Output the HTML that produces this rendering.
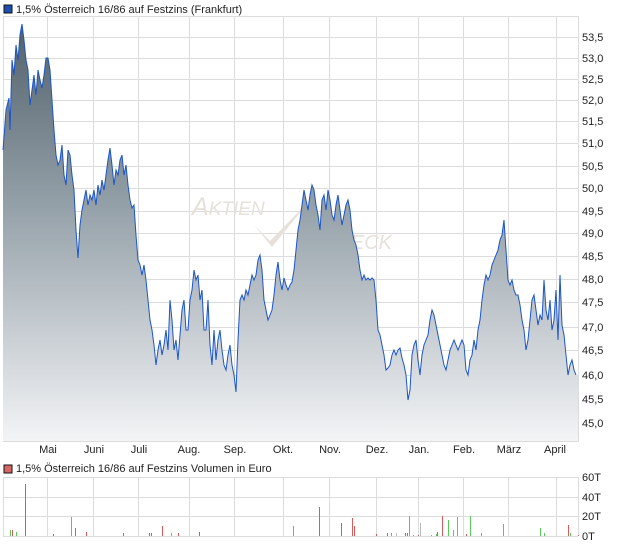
<!DOCTYPE html>
<html><head><meta charset="utf-8"><style>
body{margin:0;background:#fff;width:620px;height:546px;overflow:hidden;font-family:"Liberation Sans",sans-serif}
svg{position:absolute;left:0;top:0}
</style></head><body>
<svg width="620" height="546" viewBox="0 0 620 546" font-family="Liberation Sans, sans-serif" font-size="11" fill="#222">
<defs>
<linearGradient id="g" x1="0" y1="16" x2="0" y2="441" gradientUnits="userSpaceOnUse">
<stop offset="0" stop-color="#4f5e69"/><stop offset="0.45" stop-color="#95a1a9"/><stop offset="1" stop-color="#f3f4f6"/>
</linearGradient>
</defs>
<rect x="4" y="5" width="8" height="8" fill="#1f4fb0" stroke="#111" stroke-width="1"/>
<text x="16" y="13">1,5% Österreich 16/86 auf Festzins (Frankfurt)</text>
<g stroke="#dcdcdc" stroke-width="1" shape-rendering="crispEdges">
<rect x="3.5" y="16.5" width="575" height="425" fill="none"/>
<path d="M47.5 16V441M93.5 16V441M138.5 16V441M189.5 16V441M234.5 16V441M283.5 16V441M329.5 16V441M376.5 16V441M418.5 16V441M463.5 16V441M508.5 16V441M556.5 16V441"/>
<path d="M3 37.5H578M3 58.5H578M3 79.5H578M3 100.5H578M3 121.5H578M3 143.5H578M3 166.5H578M3 188.5H578M3 211.5H578M3 233.5H578M3 256.5H578M3 279.5H578M3 302.5H578M3 327.5H578M3 350.5H578M3 375.5H578M3 399.5H578M3 423.5H578"/>
</g>
<g fill="#e6e1db" font-style="italic" font-size="25">
<text x="192" y="215">A<tspan font-size="19">KTIEN</tspan></text>
<text x="322" y="249" font-size="20">CHECK</text>
</g>
<path d="M254 225L270 241L312 198L272 247Z" fill="#e6e1db"/>
<polygon fill="url(#g)" points="3,441 3,150 6,110 9,98 10,130 12,60 14,75 16,45 18,60 20,35 22,24 24,40 26,60 28,70 30,105 32,90 34,75 36,95 38,70 40,80 42,88 44,75 46,58 48,58 50,70 52,100 54,130 56,155 58,165 60,160 62,145 64,175 66,185 68,150 70,155 72,175 74,190 76,230 78,258 80,225 82,210 84,200 86,190 88,205 90,195 92,200 94,190 96,205 98,185 100,195 102,180 104,190 106,175 108,160 110,148 112,165 114,185 116,170 118,175 120,160 122,155 124,175 126,165 128,185 130,200 132,208 134,205 136,235 138,260 140,265 142,275 144,265 146,280 148,300 150,320 152,330 154,345 156,365 158,350 160,340 162,355 164,345 166,330 168,350 170,300 172,320 174,350 176,340 178,360 180,335 182,310 184,300 186,330 188,330 190,300 192,290 194,270 196,280 198,275 200,300 202,290 204,330 206,330 208,300 210,345 212,365 214,330 216,360 218,340 220,330 222,350 224,365 226,370 228,355 230,345 232,365 234,375 236,392 238,340 240,300 242,295 244,300 246,290 248,295 250,285 252,275 254,280 256,275 258,260 260,255 262,270 264,300 266,310 268,320 270,315 272,310 274,295 276,275 278,262 280,280 282,290 284,278 286,285 288,290 290,285 292,282 294,270 296,250 298,230 300,220 302,205 304,190 306,200 308,210 310,195 312,185 314,190 316,205 318,215 320,230 322,200 324,195 326,210 328,190 330,200 332,215 334,220 336,205 338,195 340,210 342,225 344,215 346,205 348,200 350,210 352,230 354,240 356,245 358,255 360,270 362,280 364,275 366,280 368,278 370,280 372,278 374,280 376,300 378,330 380,335 382,345 384,355 386,370 388,368 390,365 392,355 394,350 396,355 398,350 400,348 402,358 404,365 406,375 408,400 410,390 412,355 414,345 416,340 418,360 420,375 422,355 424,345 426,340 428,335 430,320 432,310 434,315 436,325 438,335 440,345 442,355 444,365 446,370 448,360 450,350 452,345 454,340 456,345 458,350 460,345 462,340 464,345 466,370 468,375 470,360 472,355 474,340 476,350 478,330 480,320 482,300 484,285 486,275 488,280 490,275 492,265 494,260 496,255 498,250 500,240 502,235 504,220 506,250 508,280 510,285 512,280 514,290 516,295 518,295 520,305 522,320 524,330 526,350 528,340 530,320 532,300 534,295 536,310 538,325 540,315 542,320 544,280 546,310 548,320 550,300 552,330 554,320 556,290 558,340 560,275 562,325 564,335 566,355 568,375 570,365 572,360 574,370 576,375 578,375 578,441"/>
<polyline fill="none" stroke="#1b55c9" stroke-width="1" points="3,150 6,110 9,98 10,130 12,60 14,75 16,45 18,60 20,35 22,24 24,40 26,60 28,70 30,105 32,90 34,75 36,95 38,70 40,80 42,88 44,75 46,58 48,58 50,70 52,100 54,130 56,155 58,165 60,160 62,145 64,175 66,185 68,150 70,155 72,175 74,190 76,230 78,258 80,225 82,210 84,200 86,190 88,205 90,195 92,200 94,190 96,205 98,185 100,195 102,180 104,190 106,175 108,160 110,148 112,165 114,185 116,170 118,175 120,160 122,155 124,175 126,165 128,185 130,200 132,208 134,205 136,235 138,260 140,265 142,275 144,265 146,280 148,300 150,320 152,330 154,345 156,365 158,350 160,340 162,355 164,345 166,330 168,350 170,300 172,320 174,350 176,340 178,360 180,335 182,310 184,300 186,330 188,330 190,300 192,290 194,270 196,280 198,275 200,300 202,290 204,330 206,330 208,300 210,345 212,365 214,330 216,360 218,340 220,330 222,350 224,365 226,370 228,355 230,345 232,365 234,375 236,392 238,340 240,300 242,295 244,300 246,290 248,295 250,285 252,275 254,280 256,275 258,260 260,255 262,270 264,300 266,310 268,320 270,315 272,310 274,295 276,275 278,262 280,280 282,290 284,278 286,285 288,290 290,285 292,282 294,270 296,250 298,230 300,220 302,205 304,190 306,200 308,210 310,195 312,185 314,190 316,205 318,215 320,230 322,200 324,195 326,210 328,190 330,200 332,215 334,220 336,205 338,195 340,210 342,225 344,215 346,205 348,200 350,210 352,230 354,240 356,245 358,255 360,270 362,280 364,275 366,280 368,278 370,280 372,278 374,280 376,300 378,330 380,335 382,345 384,355 386,370 388,368 390,365 392,355 394,350 396,355 398,350 400,348 402,358 404,365 406,375 408,400 410,390 412,355 414,345 416,340 418,360 420,375 422,355 424,345 426,340 428,335 430,320 432,310 434,315 436,325 438,335 440,345 442,355 444,365 446,370 448,360 450,350 452,345 454,340 456,345 458,350 460,345 462,340 464,345 466,370 468,375 470,360 472,355 474,340 476,350 478,330 480,320 482,300 484,285 486,275 488,280 490,275 492,265 494,260 496,255 498,250 500,240 502,235 504,220 506,250 508,280 510,285 512,280 514,290 516,295 518,295 520,305 522,320 524,330 526,350 528,340 530,320 532,300 534,295 536,310 538,325 540,315 542,320 544,280 546,310 548,320 550,300 552,330 554,320 556,290 558,340 560,275 562,325 564,335 566,355 568,375 570,365 572,360 574,370 576,375"/>
<g>
<text x="582" y="41">53,5</text><text x="582" y="62">53,0</text><text x="582" y="83">52,5</text><text x="582" y="104">52,0</text><text x="582" y="125">51,5</text><text x="582" y="147">51,0</text><text x="582" y="170">50,5</text><text x="582" y="192">50,0</text><text x="582" y="215">49,5</text><text x="582" y="237">49,0</text><text x="582" y="260">48,5</text><text x="582" y="283">48,0</text><text x="582" y="306">47,5</text><text x="582" y="331">47,0</text><text x="582" y="354">46,5</text><text x="582" y="379">46,0</text><text x="582" y="403">45,5</text><text x="582" y="427">45,0</text>
</g>
<g text-anchor="middle">
<text x="48" y="453">Mai</text><text x="94" y="453">Juni</text><text x="139" y="453">Juli</text><text x="189" y="453">Aug.</text><text x="235" y="453">Sep.</text><text x="283" y="453">Okt.</text><text x="330" y="453">Nov.</text><text x="377" y="453">Dez.</text><text x="419" y="453">Jan.</text><text x="464" y="453">Feb.</text><text x="509" y="453">März</text><text x="555" y="453">April</text>
</g>
<rect x="4" y="465" width="8" height="8" fill="#d96666" stroke="#111" stroke-width="1"/>
<text x="16" y="472">1,5% Österreich 16/86 auf Festzins Volumen in Euro</text>
<g stroke="#dcdcdc" stroke-width="1" shape-rendering="crispEdges">
<path d="M3.5 477V536M578.5 477V536M47.5 477V536M93.5 477V536M138.5 477V536M189.5 477V536M234.5 477V536M283.5 477V536M329.5 477V536M376.5 477V536M418.5 477V536M463.5 477V536M508.5 477V536M556.5 477V536"/>
<path d="M3 477.5H578M3 497.5H578M3 516.5H578M3 536.5H578"/>
</g>
<g stroke-width="1.3" shape-rendering="crispEdges">
<path stroke="#d85a5a" d="M25.5 484V536M12.5 530V536M53.5 534V536M75.5 528V536M86.5 532V536M123.5 533V536M149.5 533V536M151.5 533V536M162.5 526V536M178.5 533V536M199.5 532V536M319.5 507V536M341.5 523V536M352.5 518V536M354.5 526V536M376.5 534V536M387.5 533V536M405.5 533V536M407.5 533V536M418.5 535V536M437.5 532V536M442.5 516V536M466.5 534V536M568.5 525V536M578.5 535V536"/>
<path stroke="#5cc95c" d="M10.5 530V536M16.5 532V536M71.5 517V536M171.5 533V536M293.5 526V536M391.5 533V536M409.5 516V536M413.5 535V536M431.5 535V536M436.5 534V536M448.5 520V536M453.5 530V536M457.5 517V536M470.5 516V536M481.5 533V536M503.5 524V536M540.5 528V536M544.5 533V536M570.5 533V536"/>
<path stroke="#b8b8b8" d="M396.5 533V536M420.5 523V536"/>
</g>
<text x="582" y="481">60T</text><text x="582" y="501">40T</text><text x="582" y="520">20T</text><text x="582" y="540">0T</text>
</svg>
</body></html>
